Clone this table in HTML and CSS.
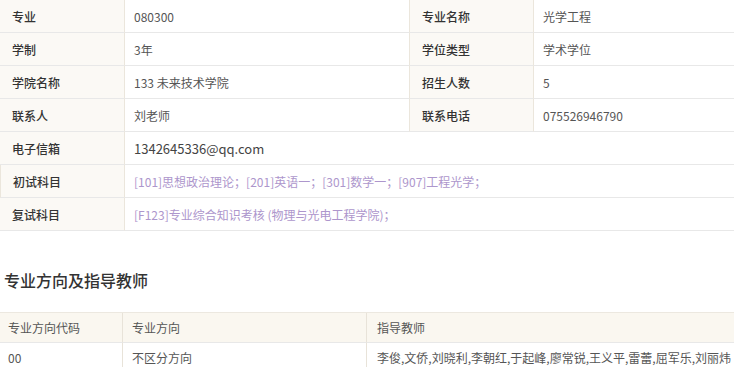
FILE: index.html
```html
<!DOCTYPE html>
<html lang="zh-CN">
<head>
<meta charset="utf-8">
<title>专业信息</title>
<link rel="stylesheet" href="styles.css">
</head>
<body>
<div class="info">
  <div class="lbl">专业</div><div class="val">080300</div><div class="lbl">专业名称</div><div class="val">光学工程</div>
  <div class="lbl">学制</div><div class="val">3年</div><div class="lbl">学位类型</div><div class="val">学术学位</div>
  <div class="lbl">学院名称</div><div class="val">133 未来技术学院</div><div class="lbl">招生人数</div><div class="val">5</div>
  <div class="lbl">联系人</div><div class="val">刘老师</div><div class="lbl">联系电话</div><div class="val">075526946790</div>
  <div class="lbl">电子信箱</div><div class="val wide dark">1342645336@qq.com</div>
  <div class="lbl">初试科目</div><div class="val wide link">[101]思想政治理论；[201]英语一；[301]数学一；[907]工程光学；</div>
  <div class="lbl">复试科目</div><div class="val wide link">[F123]专业综合知识考核 (物理与光电工程学院)；</div>
</div>

<h2 class="title">专业方向及指导教师</h2>

<div class="dir">
  <div class="th c1">专业方向代码</div><div class="th c2">专业方向</div><div class="th c3">指导教师</div>
  <div class="td c1">00</div><div class="td c2">不区分方向</div><div class="td c3">李俊,文侨,刘晓利,李朝红,于起峰,廖常锐,王义平,雷蕾,屈军乐,刘丽炜</div>
</div>
</body>
</html>
```

FILE: styles.css
```css
html, body {
  margin: 0;
  padding: 0;
  background: #fff;
}
body {
  width: 734px;
  overflow: hidden;
  font-family: "Noto Sans CJK SC", "Noto Sans", sans-serif;
  font-size: 12px;
  color: #555;
}
.info {
  display: grid;
  grid-template-columns: 124px 285px 124px 1fr;
}
.info > div {
  height: 32px;
  border-bottom: 1px solid #e8e8e8;
  display: flex;
  align-items: center;
  white-space: nowrap;
}
.lbl {
  background: #fbf9f5;
  color: #333;
  font-weight: 500;
  padding-left: 12px;
}
.info .lbl:not(:first-child) {
  border-left: 1px solid #ebe6dc;
}
.info .lbl:nth-child(4n+1) {
  border-left: none;
}
.val {
  border-left: 1px solid #ebe6dc;
  padding-left: 9px;
  color: #555;
}
.wide {
  grid-column: span 3;
}
.dark {
  color: #444;
  font-size: 13px;
}
.link {
  color: #ad96cc;
}
.title {
  margin: 0;
  padding: 38px 0 0 4px;
  height: 42px;
  font-size: 16px;
  font-weight: 500;
  color: #333;
  line-height: 22px;
}
.dir {
  margin-top: 1px;
  display: grid;
  grid-template-columns: 122px 244px 1fr;
  border-top: 1px solid #ece8e0;
}
.dir > div {
  height: 29px;
  display: flex;
  align-items: center;
  border-bottom: 1px solid #e8e8e8;
  white-space: nowrap;
  overflow: hidden;
}
.th {
  background: #faf7f0;
  color: #555;
}
.td {
  color: #555;
}
.c1 { padding-left: 8px; }
.c2 { padding-left: 9px; border-left: 1px solid #e8e3d9; }
.c3 { padding-left: 10px; border-left: 1px solid #e8e3d9; }
```
